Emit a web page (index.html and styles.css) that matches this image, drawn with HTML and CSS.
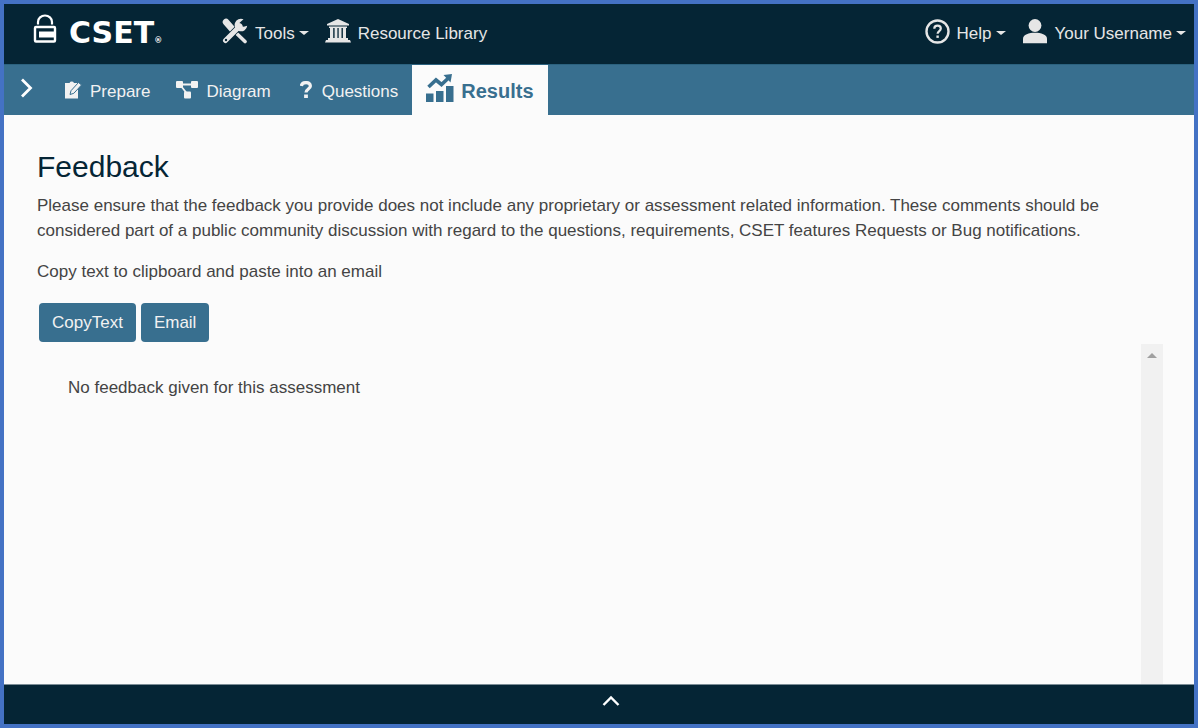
FILE: index.html
```html
<!DOCTYPE html>
<html lang="en">
<head>
<meta charset="utf-8">
<meta name="viewport" content="width=device-width, initial-scale=1">
<title>CSET Feedback</title>
<link rel="stylesheet" href="styles.css">
</head>
<body>
<div class="app">
  <header class="topbar">
    <a class="brand" href="#">
      <svg class="lock" width="24" height="30" viewBox="0 0 24 30" aria-hidden="true">
        <path d="M5 10.500V8a7 6.500 0 0 1 14 0v2.500" fill="none" stroke="#fff" stroke-width="2.200"/>
        <rect x="2" y="13" width="20" height="14.500" rx="1" fill="none" stroke="#fff" stroke-width="2.400"/>
        <path d="M6 17.500h16v6H6z" fill="#fff"/>
      </svg>
      <span class="wordmark">CSET<small>®</small></span>
    </a>
    <button class="menu tools" type="button">
      <svg width="26" height="26" viewBox="0 0 26 26" aria-hidden="true">
        <path d="M4 4l7 8" stroke="#e6e6e6" stroke-width="6.500" stroke-linecap="round"/>
        <path d="M11 12l12 11.500" stroke="#e6e6e6" stroke-width="3.600" stroke-linecap="round"/>
        <path d="M3.500 22.500L18 8" stroke="#052535" stroke-width="6.500"/>
        <path d="M3.500 22.500L18 8" stroke="#e6e6e6" stroke-width="5" stroke-linecap="round"/>
        <path d="M21.500 1.300a6.300 6.300 0 1 0 3.700 6.400l-3.500 1-3.300-1-.8-3z" fill="#e6e6e6"/>
        <circle cx="4" cy="22" r="1.200" fill="#052535"/>
      </svg>
      <span>Tools</span><i class="caret"></i>
    </button>
    <a class="menu library" href="#">
      <svg width="26" height="24" viewBox="0 0 26 24" fill="#e6e6e6" aria-hidden="true">
        <path d="M13 0L24 5v1.500H2V5zM4 7.500h18V9H4zM5 9h3.200v10H5zm4.600 0h2.800v10H9.600zm4.100 0h2.800v10h-2.800zm4.200 0H21v10h-3.100zM3 19h20v2H3zm-2 2h24l1 2.500H0z"/>
      </svg>
      <span>Resource Library</span>
    </a>
    <div class="spacer"></div>
    <button class="menu help" type="button">
      <svg width="25" height="25" viewBox="0 0 25 25" fill="none" stroke="#e6e6e6" aria-hidden="true">
        <circle cx="12.500" cy="12.500" r="11" stroke-width="2.400"/>
        <path d="M9.300 9.700c0-4.200 6.500-4 6.500-.2 0 2.500-3.200 2.600-3.200 5.300" stroke-width="2.200"/>
        <path d="M12.600 16.500v2.400" stroke-width="2.400"/>
      </svg>
      <span>Help</span><i class="caret"></i>
    </button>
    <button class="menu user" type="button">
      <svg width="26" height="25" viewBox="0 0 26 25" fill="#e6e6e6" aria-hidden="true">
        <circle cx="13" cy="6.500" r="6.400"/>
        <path d="M1 24.300v-4.500C1 15.500 7 13.800 13 13.800s12 1.700 12 6v4.500z"/>
      </svg>
      <span>Your Username</span><i class="caret"></i>
    </button>
  </header>

  <nav class="tabs" aria-label="Assessment">
    <button class="expand" type="button" aria-label="Expand navigation">
      <svg width="14" height="20" viewBox="0 0 14 20" aria-hidden="true"><path d="M2 1.500l8.500 8.500L2 18.500" fill="none" stroke="#fff" stroke-width="2.800"/></svg>
    </button>
    <a class="tab prepare" href="#">
      <svg width="17" height="18" viewBox="0 0 17 18" aria-hidden="true">
        <path d="M0 2h4.500a2.500 2.500 0 0 1 4.500 0h4v15.500H0z" fill="#f2f2f2"/>
        <path d="M5 13.500l1-3.800L13.500 1.500l3 2.500-7.700 8.300z" fill="#f2f2f2" stroke="#386f8f" stroke-width="1"/>
      </svg>
      <span>Prepare</span>
    </a>
    <a class="tab diagram" href="#">
      <svg width="22" height="18" viewBox="0 0 22 18" fill="#f2f2f2" aria-hidden="true">
        <rect width="7" height="7" rx="1"/><rect x="15" width="7" height="7" rx="1"/><rect x="8" y="10.500" width="7" height="7" rx="1"/>
        <path d="M6 3.500h10M5 5l5.500 7" stroke="#f2f2f2" stroke-width="1.800"/>
      </svg>
      <span>Diagram</span>
    </a>
    <a class="tab questions" href="#">
      <svg width="12" height="18" viewBox="0 0 12 18" fill="none" stroke="#f2f2f2" aria-hidden="true">
        <path d="M1.300 5C2 .4 10.400.4 10.400 5c0 3-4.400 3-4.400 6.500" stroke-width="3.200"/>
        <path d="M6 13.500V17" stroke-width="3.800"/>
      </svg>
      <span>Questions</span>
    </a>
    <a class="tab results" href="#" aria-current="page">
      <svg width="28" height="28" viewBox="0 0 28 28" fill="#386f8f" aria-hidden="true">
        <path d="M0 19.500h7.500V28H0zm10-2.500h7.500v11H10zm10-5h7.500v16H20z"/>
        <path d="M2.500 13l7.500-7 5.500 4.500L23 3.500" fill="none" stroke="#386f8f" stroke-width="3.600"/>
        <path d="M17.500 1L26 0l-1.500 8.500z"/>
      </svg>
      <span>Results</span>
    </a>
  </nav>

  <main class="content">
    <h1>Feedback</h1>
    <p>Please ensure that the feedback you provide does not include any proprietary or assessment related information. These comments should be considered part of a public community discussion with regard to the questions, requirements, CSET features Requests or Bug notifications.</p>
    <p>Copy text to clipboard and paste into an email</p>
    <div class="actions">
      <button class="btn" type="button">CopyText</button>
      <button class="btn" type="button">Email</button>
    </div>
    <section class="feedback">
      <p>No feedback given for this assessment</p>
      <div class="track" aria-hidden="true"><i class="up"></i></div>
    </section>
  </main>

  <footer class="bottombar">
    <button type="button" aria-label="Show footer">
      <svg width="18" height="12" viewBox="0 0 18 12" aria-hidden="true"><path d="M1.500 10L9 2.500l7.500 7.500" fill="none" stroke="#fff" stroke-width="2.400"/></svg>
    </button>
  </footer>
</div>
</body>
</html>
```

FILE: styles.css
```css
* { box-sizing: border-box; }
body {
  margin: 0;
  font-family: "Liberation Sans", Arial, sans-serif;
  font-size: 17px;
  line-height: 25px;
  color: #444;
}
svg { display: block; flex: none; }
button { font: inherit; color: inherit; background: none; border: 0; padding: 0; cursor: pointer; }
a { color: inherit; text-decoration: none; }
.app {
  min-height: 100vh;
  display: flex;
  flex-direction: column;
  border: 4px solid #4472c4;
  background: #fbfbfb;
}
.topbar {
  display: flex;
  align-items: center;
  height: 60px;
  padding: 0 8px 2px 29px;
  background: #052535;
  color: #e6e6e6;
}
.brand { display: flex; align-items: center; gap: 12px; width: 189px; color: #fff; }
.lock { margin-bottom: 8px; }
.wordmark {
  font-family: "DejaVu Sans", sans-serif;
  font-weight: bold;
  font-size: 30px;
  line-height: 28px;
  padding-top: 8px;
}
.wordmark small { font-size: 8px; }
.menu { display: flex; align-items: center; gap: 7px; white-space: nowrap; }
.menu svg { margin-bottom: 4px; }
.library { margin-left: 16px; }
.user { margin-left: 16px; }
.spacer { flex: 1; }
.caret {
  border: 5px solid transparent;
  border-top: 4px solid #e6e6e6;
  border-bottom: 0;
  margin-left: -3px;
}
.tabs {
  display: flex;
  height: 51px;
  background: #386f8f;
  border-top: 1px solid #2b627f;
  color: #f2f2f2;
}
.expand { width: 61px; padding: 0 0 4px 16px; }
.tab { display: flex; align-items: center; padding-top: 3px; }
.tab svg { margin-bottom: 4px; }
.prepare { gap: 8px; margin-right: 26px; }
.diagram { gap: 8px; margin-right: 29px; }
.questions { gap: 10px; margin-right: 14px; }
.results {
  gap: 7px;
  padding: 3px 14px 0;
  background: #fbfbfb;
  color: #386f8f;
  font-size: 20px;
  font-weight: bold;
}
.results svg { margin-bottom: 8px; }
.content { flex: 1; display: flex; flex-direction: column; padding: 32px 31px 0 33px; }
h1 { margin: 0 0 6px; font-size: 30px; line-height: 40px; font-weight: normal; color: #052535; }
p { margin: 0 0 16px; }
.content > p { max-width: 1080px; }
.actions { display: flex; gap: 5px; padding: 3px 2px 2px; }
.btn {
  height: 39px;
  padding: 0 13px 1px;
  border-radius: 4px;
  background: #386f8f;
  color: #f2f2f2;
}
.feedback { flex: 1; display: flex; justify-content: space-between; }
.feedback p { padding: 31px 0 0 31px; }
.track { width: 22px; background: #f1f1f1; padding: 9px 6px 0; }
.up { display: block; border: 5px solid transparent; border-top: 0; border-bottom: 5px solid #a0a0a0; }
.bottombar {
  height: 40px;
  display: flex;
  justify-content: center;
  background: #052535;
  border-top: 1px solid #7c8d96;
}
.bottombar button { padding: 0 0 7px 24px; }
```
